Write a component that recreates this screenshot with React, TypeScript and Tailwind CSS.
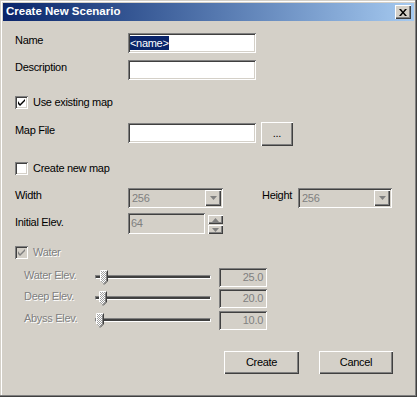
import React from "react";

const sunken =
	"shadow-[inset_1px_1px_#808080,inset_-1px_-1px_#ffffff,inset_2px_2px_#404040,inset_-2px_-2px_#d4d0c8]";
const raised =
	"shadow-[inset_1px_1px_#ffffff,inset_-1px_-1px_#404040,inset_-2px_-2px_#808080]";
const etched = "text-[#808080] [text-shadow:1px_1px_0_#ffffff]";

const Label = ({ children, w = "w-[113px]" }: { children: React.ReactNode; w?: string }) => (
	<div className={`${w} shrink-0 leading-[13px] pt-[1px]`}>{children}</div>
);

const Check = ({ checked, disabled }: { checked?: boolean; disabled?: boolean }) => (
	<div
		className={`w-[13px] h-[13px] shrink-0 flex items-center justify-center ${sunken} ${
			disabled ? "bg-[#d4d0c8]" : "bg-white"
		}`}
	>
		{checked && (
			<svg width="7" height="7" viewBox="0 0 7 7">
				<path
					d="M0 2 L0 5 L2 7 L7 2 L7 0 L2 5 Z"
					fill={disabled ? "#808080" : "#000000"}
				/>
			</svg>
		)}
	</div>
);

const Arrow = ({ up }: { up?: boolean }) => (
	<svg width="7" height="4" viewBox="0 0 7 4">
		<path d={up ? "M3.5 0 L7 4 L0 4 Z" : "M0 0 L7 0 L3.5 4 Z"} fill="#808080" />
	</svg>
);

const Combo = ({ value, w }: { value: string; w: string }) => (
	<div className={`${w} h-[20px] shrink-0 bg-[#d4d0c8] ${sunken} flex items-center pl-[4px] pr-[2px]`}>
		<span className="flex-1 text-[#808080]">{value}</span>
		<div className={`w-[16px] h-[16px] ${raised} flex items-center justify-center`}>
			<Arrow />
		</div>
	</div>
);

const Thumb = () => (
	<svg width="8" height="15" viewBox="0 0 8 15">
		<defs>
			<pattern id="dith" width="2" height="2" patternUnits="userSpaceOnUse">
				<rect width="2" height="2" fill="#ffffff" />
				<rect width="1" height="1" fill="#a0a0a0" />
				<rect x="1" y="1" width="1" height="1" fill="#a0a0a0" />
			</pattern>
		</defs>
		<path d="M0.5 0.5 L7.5 0.5 L7.5 11 L4 14.5 L0.5 11 Z" fill="url(#dith)" />
		<path d="M0.5 11 L0.5 0.5 L7.5 0.5" stroke="#ffffff" fill="none" />
		<path d="M7.5 0.5 L7.5 11 L4 14.5" stroke="#404040" fill="none" />
		<path d="M6.5 1.5 L6.5 11 L4 13.5" stroke="#808080" fill="none" />
	</svg>
);

const SliderRow = ({ label, value, pos, mt }: { label: string; value: string; pos: number; mt: string }) => (
	<div className={`${mt} h-[19px] flex items-start pl-[9px]`}>
		<Label w="w-[71px]">
			<span className={etched}>{label}</span>
		</Label>
		<div className="relative w-[116px] h-full shrink-0">
			<div className="absolute left-0 right-0 top-[7px] h-[4px] bg-[#404040] border-t border-l border-[#808080] border-b-white border-r-white border-b border-r" />
			<div className="absolute top-[2px]" style={{ left: pos }}>
				<Thumb />
			</div>
		</div>
		<div className={`ml-[8px] w-[48px] h-[19px] shrink-0 ${sunken} flex items-center justify-end pr-[4px] text-[#808080]`}>
			{value}
		</div>
	</div>
);

const Button = ({ children, w }: { children: React.ReactNode; w: string }) => (
	<div className={`${w} h-[23px] ${raised} flex items-center justify-center text-black`}>{children}</div>
);

export default function App() {
	return (
		<div className="w-[417px] h-[397px] bg-[#d4d0c8] p-[3px] flex flex-col font-['Liberation_Sans',Arial,sans-serif] text-[11px] tracking-[-0.3px] text-black shadow-[inset_-1px_-1px_#404040,inset_-2px_-2px_#808080,inset_1px_1px_#d4d0c8,inset_2px_2px_#ffffff]">
			<div className="h-[18px] shrink-0 bg-linear-to-r from-[#0a246a] to-[#a6caf0] flex items-center pl-[3px] pr-[3px]">
				<span className="flex-1 text-white font-bold text-[11.5px] tracking-normal leading-none">Create New Scenario</span>
				<div className={`w-[16px] h-[14px] bg-[#d4d0c8] ${raised} flex items-center justify-center`}>
					<svg width="8" height="7" viewBox="0 0 8 7">
						<path d="M0 0 L2 0 L4 2.5 L6 0 L8 0 L5 3.5 L8 7 L6 7 L4 4.5 L2 7 L0 7 L3 3.5 Z" fill="#000" />
					</svg>
				</div>
			</div>

			<div className="flex flex-col pl-[12px]">
				<div className="mt-[12px] h-[20px] flex items-start">
					<Label>Name</Label>
					<div className={`w-[128px] h-[20px] bg-white ${sunken} flex items-center pl-[2px]`}>
						<span className="bg-[#0a246a] text-white leading-[14px]">&lt;name&gt;</span>
					</div>
				</div>
				<div className="mt-[7px] h-[20px] flex items-start">
					<Label>Description</Label>
					<div className={`w-[128px] h-[20px] bg-white ${sunken}`} />
				</div>

				<div className="mt-[16px] h-[13px] flex items-center">
					<Check checked />
					<span className="ml-[5px]">Use existing map</span>
				</div>

				<div className="mt-[13px] h-[24px] flex items-start">
					<Label>
						<div className="pt-[1px]">Map File</div>
					</Label>
					<div className={`mt-[1px] w-[128px] h-[20px] bg-white ${sunken}`} />
					<div className={`ml-[5px] w-[32px] h-[24px] ${raised} flex items-center justify-center pb-[2px]`}>
						...
					</div>
				</div>

				<div className="mt-[16px] h-[13px] flex items-center">
					<Check />
					<span className="ml-[5px]">Create new map</span>
				</div>

				<div className="mt-[13px] h-[20px] flex items-start">
					<Label>Width</Label>
					<Combo value="256" w="w-[95px]" />
					<div className="ml-[39px]">
						<Label w="w-[36px]">Height</Label>
					</div>
					<Combo value="256" w="w-[94px]" />
				</div>

				<div className="mt-[5px] h-[21px] flex items-start">
					<Label>
						<div className="pt-[2px]">Initial Elev.</div>
					</Label>
					<div className={`w-[77px] h-[21px] ${sunken} flex items-center pl-[3px] text-[#808080]`}>64</div>
					<div className="ml-[3px] pt-[2px] flex flex-col gap-[1px]">
						<div className={`w-[15px] h-[9px] ${raised} flex items-center justify-center`}>
							<Arrow up />
						</div>
						<div className={`w-[15px] h-[9px] ${raised} flex items-center justify-center`}>
							<Arrow />
						</div>
					</div>
				</div>

				<div className="mt-[12px] h-[13px] flex items-center">
					<Check checked disabled />
					<span className={`ml-[5px] ${etched}`}>Water</span>
				</div>

				<SliderRow label="Water Elev." value="25.0" pos={5} mt="mt-[9px]" />
				<SliderRow label="Deep Elev." value="20.0" pos={4} mt="mt-[2px]" />
				<SliderRow label="Abyss Elev." value="10.0" pos={1} mt="mt-[3px]" />

				<div className="mt-[21px] flex pl-[209px] gap-[20px]">
					<Button w="w-[75px]">Create</Button>
					<Button w="w-[74px]">Cancel</Button>
				</div>
			</div>
		</div>
	);
}
